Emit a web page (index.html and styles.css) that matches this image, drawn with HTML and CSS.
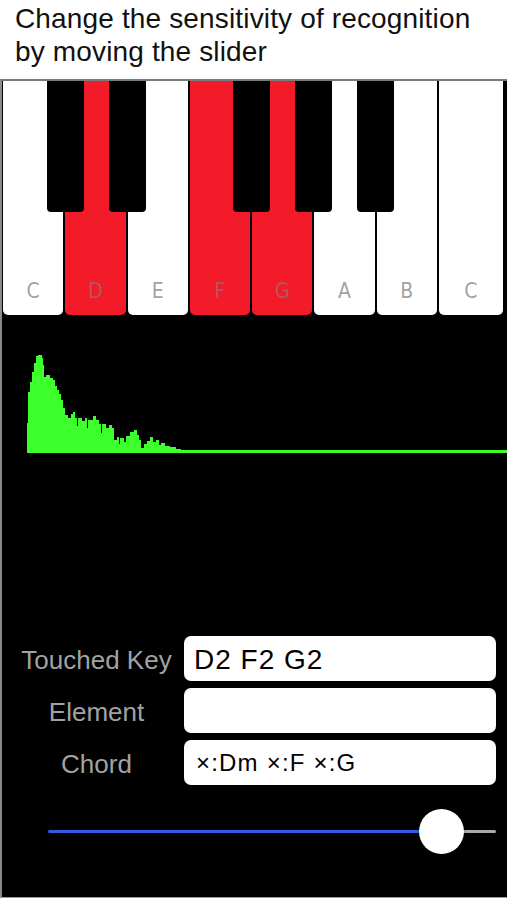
FILE: index.html
```html
<!DOCTYPE html>
<html>
<head>
<meta charset="utf-8">
<link rel="stylesheet" href="styles.css">
</head>
<body>
<header class="hint">
  <p class="hint-text">Change the sensitivity of recognition<br>by moving the slider</p>
</header>
<main class="screen">
  <div class="piano">
    <div class="white-keys">
      <div class="wkey"><span class="klabel">C</span></div>
      <div class="wkey on"><span class="klabel">D</span></div>
      <div class="wkey"><span class="klabel">E</span></div>
      <div class="wkey on"><span class="klabel">F</span></div>
      <div class="wkey on"><span class="klabel">G</span></div>
      <div class="wkey"><span class="klabel">A</span></div>
      <div class="wkey"><span class="klabel">B</span></div>
      <div class="wkey"><span class="klabel">C</span></div>
    </div>
    <div class="bkey bk1"></div>
    <div class="bkey bk2"></div>
    <div class="bkey bk3"></div>
    <div class="bkey bk4"></div>
    <div class="bkey bk5"></div>
  </div>

  <svg class="spectrum" viewBox="2 330 505 130" width="505" height="130">
    <polygon fill="#3cff2c" points="27,453 27,423 28,423 28,392 30,392 30,382 32,382 32,372 34,372 34,363 36,363 36,356 38,356 38,355 42,355 42,358 43,358 43,365 44,365 44,377 46,377 46,375 50,375 50,378 53,378 53,380 55,380 55,386 57,386 57,390 59,390 59,394 61,394 61,400 63,400 63,408 65,408 65,415 68,415 68,418 71,418 71,414 73,414 73,412 75,412 75,418 77,418 77,426 78,426 78,418 82,418 82,421 85,421 85,418 87,418 87,428 88,428 88,420 93,420 93,416 96,416 96,420 99,420 99,424 101,424 101,433 102,433 102,424 106,424 106,428 109,428 109,425 112,425 112,428 114,428 114,440 117,440 117,437 119,437 119,444 120,444 120,438 124,438 124,442 126,442 126,436 130,436 130,432 134,432 134,430 137,430 137,435 139,435 139,440 141,440 141,448 144,448 144,444 147,444 147,441 150,441 150,437 153,437 153,442 156,442 156,440 159,440 159,445 161,445 161,443 165,443 165,446 170,446 170,447 176,447 176,449 181,449 181,450 507,450 507,453"/>
  </svg>

  <section class="readout">
    <div class="row">
      <span class="label">Touched Key</span>
      <div class="field big">D2 F2 G2</div>
    </div>
    <div class="row">
      <span class="label">Element</span>
      <div class="field"></div>
    </div>
    <div class="row">
      <span class="label">Chord</span>
      <div class="field small">×:Dm ×:F ×:G</div>
    </div>
  </section>

  <div class="slider">
    <div class="track">
      <div class="fill"></div>
      <div class="rest"></div>
      <div class="thumb"></div>
    </div>
  </div>
</main>
</body>
</html>
```
FILE: styles.css
```css
html, body {
  margin: 0;
  padding: 0;
  background: #fff;
}
body {
  width: 507px;
  height: 900px;
  overflow: hidden;
  font-family: "Liberation Sans", Arial, sans-serif;
}
.hint {
  height: 79px;
  box-sizing: border-box;
  padding: 2px 0 0 15px;
  background: #fff;
}
.hint-text {
  margin: 0;
  font-size: 28px;
  line-height: 33px;
  letter-spacing: 0.15px;
  color: #111;
}
.screen {
  height: 819px;
  box-sizing: border-box;
  background: #000;
  border-top: 2px solid #7a7a7a;
  border-left: 2px solid #8a8a8a;
  border-bottom: 1px solid #9a9a9a;
  display: flex;
  flex-direction: column;
}
.piano {
  position: relative;
  height: 234px;
  padding: 0 4px 0 1px;
}
.white-keys {
  display: flex;
  gap: 2px;
  height: 100%;
}
.wkey {
  flex: 1;
  background: #fff;
  border-radius: 0 0 5px 5px;
  display: flex;
  align-items: flex-end;
  justify-content: center;
  padding-bottom: 12px;
  box-sizing: border-box;
}
.wkey.on {
  background: #f31a2a;
}
.wkey:last-child {
  flex: 0 0 64px;
}
.klabel {
  font-family: "Liberation Sans Narrow", "DejaVu Sans Condensed", "Roboto Condensed", sans-serif;
  font-stretch: condensed;
  font-size: 21px;
  line-height: 24px;
  color: rgba(100, 100, 100, 0.62);
}
.wkey.on .klabel {
  color: rgba(150, 110, 110, 0.75);
}
.bkey {
  position: absolute;
  top: 0;
  width: 37px;
  height: 131px;
  background: #000;
  border-radius: 0 0 4px 4px;
}
.bk1 { left: 45px; }
.bk2 { left: 107px; }
.bk3 { left: 231px; }
.bk4 { left: 293px; }
.bk5 { left: 355px; }

.spectrum {
  display: block;
  margin-top: 15px;
}

.readout {
  margin-top: 176px;
  display: flex;
  flex-direction: column;
  gap: 7px;
  padding: 0 11px 0 16px;
}
.row {
  display: flex;
  align-items: center;
  gap: 9px;
}
.label {
  width: 157px;
  text-align: center;
  font-size: 26px;
  color: #a2a2a2;
  white-space: nowrap;
  padding-top: 4px;
}
.field {
  flex: 1;
  height: 45px;
  background: #fff;
  border-radius: 7px;
  display: flex;
  align-items: center;
  padding-left: 10px;
  color: #000;
  box-sizing: border-box;
}
.field.big {
  font-size: 28px;
  letter-spacing: 1px;
  padding-top: 3px;
}
.field.small {
  font-size: 24px;
  letter-spacing: 1.2px;
  padding-left: 12px;
}

.slider {
  margin-top: 24px;
  height: 45px;
  padding: 0 11px 0 46px;
  display: flex;
  align-items: center;
}
.track {
  position: relative;
  flex: 1;
  height: 3px;
  display: flex;
}
.fill {
  width: 393px;
  background: #2f5ee6;
  border-radius: 2px 0 0 2px;
}
.rest {
  flex: 1;
  background: #a9a9a9;
  border-radius: 0 2px 2px 0;
}
.thumb {
  position: absolute;
  left: 371px;
  top: -21px;
  width: 45px;
  height: 45px;
  border-radius: 50%;
  background: #fff;
  box-shadow: 0 1px 3px rgba(0,0,0,0.3);
}
```
